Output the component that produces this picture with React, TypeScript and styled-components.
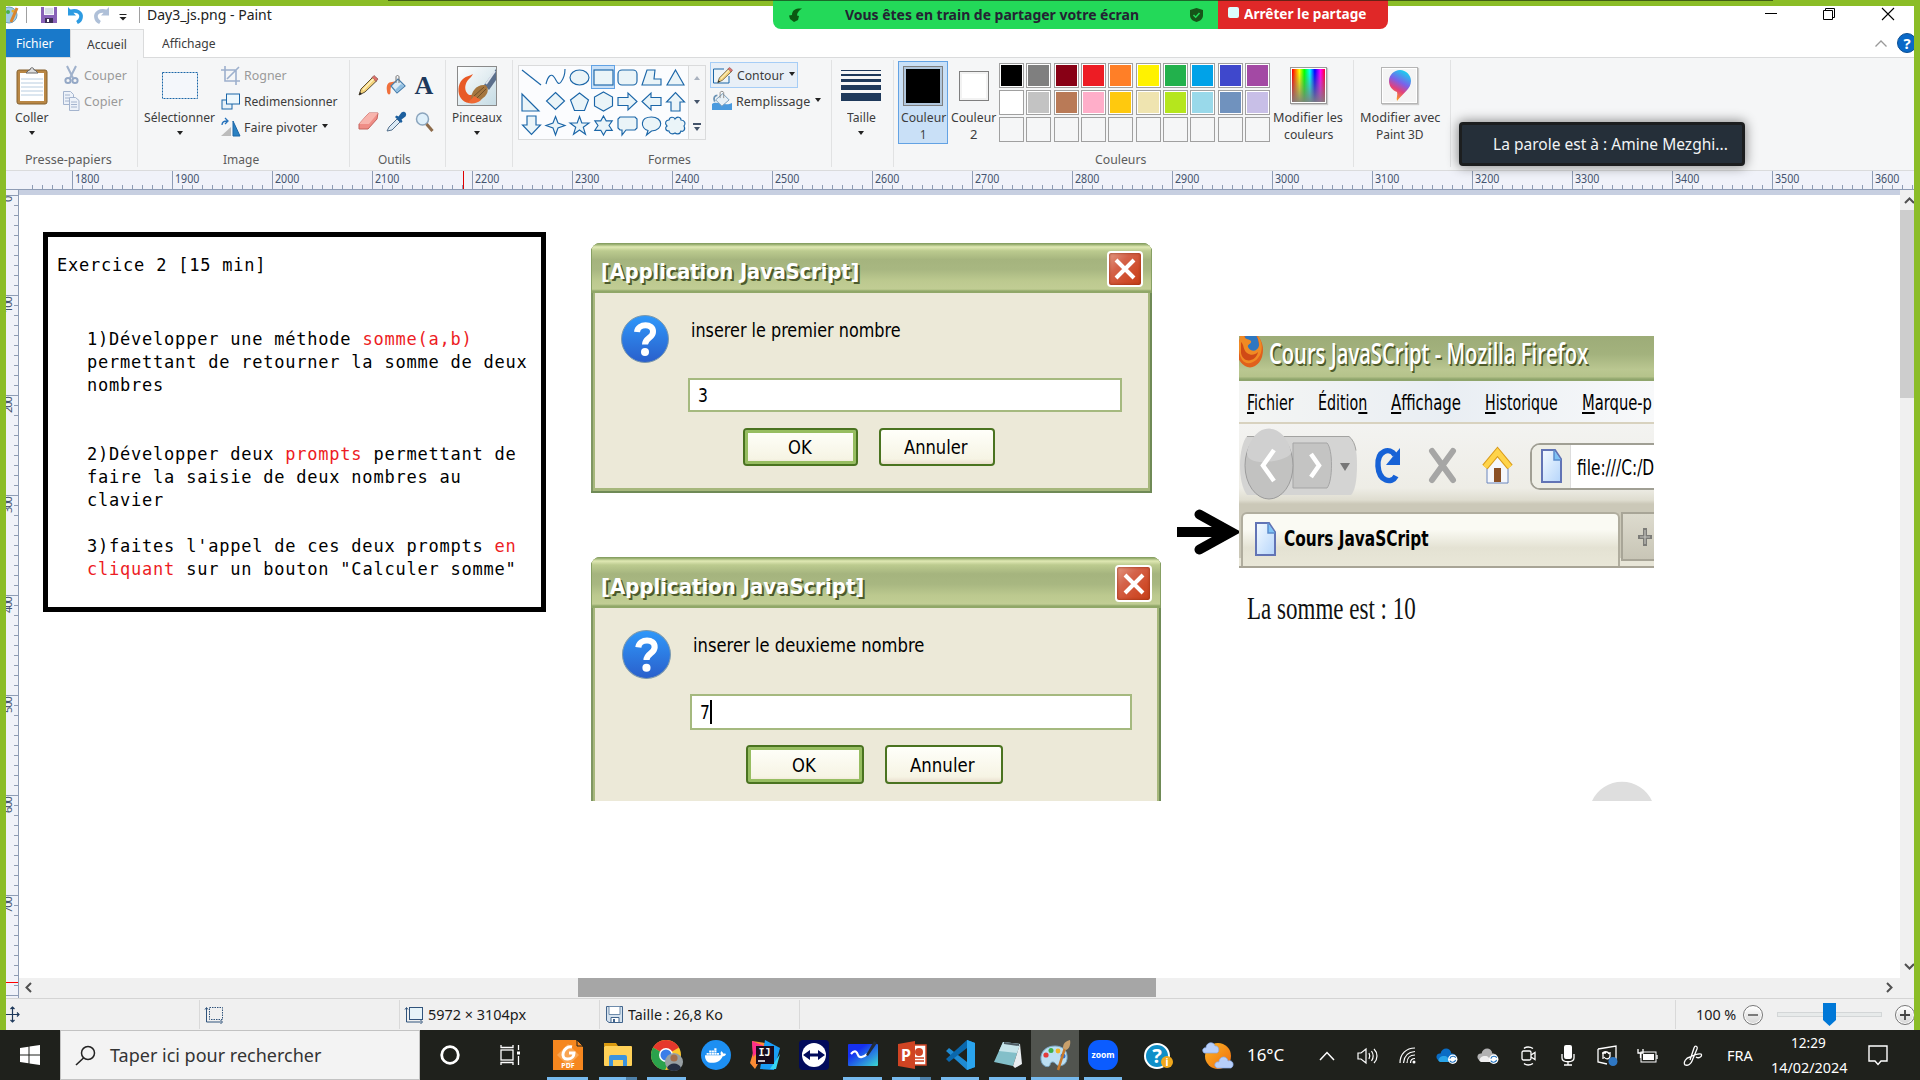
import React, { useLayoutEffect, useRef, useState } from "react";
import styled, { createGlobalStyle, css } from "styled-components";
import { FaDocker } from "react-icons/fa";

const UI = `"Noto Sans", "Open Sans", sans-serif`;
const TAHOMA = `"DejaVu Sans Condensed", "DejaVu Sans", sans-serif`;

const Global = createGlobalStyle`
  * { box-sizing: border-box; }
  html, body { margin: 0; padding: 0; overflow: hidden; }
  body { font-family: ${UI}; font-size: 13px; color: #3c3c3c; }
  svg { display: block; flex: none; overflow: visible; }
`;

/* ---------- text that is condensed or widened to a given width ---------- */
type TextProps = { w: number; size?: number; color?: string; weight?: number; font?: string; shadow?: string; children: React.ReactNode };

const FitBox = styled.span<{ $w: number; $size: number; $color?: string; $weight: number; $font: string; $shadow?: string }>`
  display: block;
  flex: none;
  width: ${(p) => p.$w}px;
  font-family: ${(p) => p.$font};
  font-size: ${(p) => p.$size}px;
  font-weight: ${(p) => p.$weight};
  line-height: 1.3;
  white-space: pre;
  text-align: left;
  ${(p) => p.$color && css`color: ${p.$color};`}
  ${(p) => p.$shadow && css`text-shadow: ${p.$shadow};`}
`;
const FitInner = styled.span`
  display: block;
  width: max-content;
  transform-origin: 0 50%;
`;

function Txt({ w, size = 13, color, weight = 400, font = UI, shadow, children }: TextProps) {
  const ref = useRef<HTMLSpanElement>(null);
  const [scale, setScale] = useState(1);
  useLayoutEffect(() => {
    if (ref.current) setScale(w / ref.current.offsetWidth);
  }, [w]);
  return (
    <FitBox $w={w} $size={size} $color={color} $weight={weight} $font={font} $shadow={shadow}>
      <FitInner ref={ref} style={{ transform: `scaleX(${scale})` }}>{children}</FitInner>
    </FitBox>
  );
}

/* ---------- frame ---------- */
const Screen = styled.div`
  position: relative;
  width: 1920px;
  height: 1080px;
  overflow: hidden;
  display: flex;
  flex-direction: column;
  background: #8bbd27;
`;
const PaintWindow = styled.main`
  margin: 6px 6px 0;
  height: 1024px;
  display: flex;
  flex-direction: column;
  background: #fff;
  overflow: hidden;
`;

/* ---------- title bar ---------- */
const TitleBar = styled.header`
  height: 23px;
  flex: none;
  display: flex;
  align-items: flex-start;
  position: relative;
`;
const QuickAccess = styled.div`
  display: flex;
  align-items: center;
  height: 18px;
  width: 141px;
  flex: none;
`;
const TitleWrap = styled.div`
  display: flex;
  height: 19px;
  align-items: center;
  color: #222;
`;
const WindowButtons = styled.div`
  margin-left: auto;
  display: flex;
  gap: 46px;
  padding: 2px 20px 0 0;
`;

const TabRow = styled.nav`
  height: 28px;
  flex: none;
  display: flex;
  align-items: stretch;
`;
const FileTab = styled.div`
  width: 64px;
  padding-left: 10px;
  background: #1979ca;
  display: flex;
  align-items: center;
`;
const HomeTab = styled.div`
  width: 74px;
  background: #f5f6f7;
  border: 1px solid #dadbdc;
  border-bottom: 0;
  margin-bottom: -1px;
  z-index: 1;
  display: flex;
  align-items: center;
  justify-content: center;
`;
const PlainTab = styled.div`
  padding-left: 18px;
  display: flex;
  align-items: center;
`;
const TabTools = styled.div`
  margin-left: auto;
  margin-right: -3px;
  display: flex;
  align-items: center;
  gap: 10px;
`;

/* ---------- ribbon ---------- */
const Ribbon = styled.section`
  height: 114px;
  flex: none;
  display: flex;
  background: #f5f6f7;
  border-top: 1px solid #dadbdc;
  border-bottom: 1px solid #dadbdc;
`;
const Group = styled.div<{ $w: number }>`
  width: ${(p) => p.$w}px;
  height: 107px;
  margin-top: 2px;
  flex: none;
  border-right: 1px solid #e1e2e3;
  display: flex;
  flex-direction: column;
`;
const GroupBody = styled.div<{ $l?: number; $gap?: number }>`
  height: 91px;
  display: flex;
  align-items: flex-start;
  padding-left: ${(p) => p.$l ?? 0}px;
  gap: ${(p) => p.$gap ?? 0}px;
`;
const GroupLabel = styled.div`
  height: 16px;
  display: flex;
  align-items: center;
  justify-content: center;
  padding-right: 6px;
  color: #5c5c5c;
`;
const BigButton = styled.div<{ $w: number; $on?: boolean }>`
  width: ${(p) => p.$w}px;
  flex: none;
  height: 83px;
  margin-top: 1px;
  display: flex;
  flex-direction: column;
  align-items: center;
  border: 1px solid ${(p) => (p.$on ? "#62a2e4" : "transparent")};
  background: ${(p) => (p.$on ? "#c9e0f7" : "transparent")};
`;
const BigIcon = styled.div`
  height: 47px;
  flex: none;
  display: flex;
  align-items: center;
  justify-content: center;
`;
const Line = styled.div`
  height: 17px;
  flex: none;
  display: flex;
  align-items: center;
  justify-content: center;
`;
const SmallColumn = styled.div`
  display: flex;
  flex-direction: column;
  padding-top: 2px;
`;
const SmallRow = styled.div<{ $off?: boolean; $gap?: number }>`
  height: 26px;
  display: flex;
  align-items: center;
  gap: ${(p) => p.$gap ?? 4}px;
  color: ${(p) => (p.$off ? "#9a9a9a" : "#3c3c3c")};
`;
const ToolGrid = styled.div`
  display: grid;
  grid-template-columns: repeat(3, 28px);
  grid-template-rows: repeat(2, 36px);
  padding-top: 7px;
  place-items: center;
`;
const Caret = styled.i<{ $up?: boolean; $c?: string }>`
  width: 0;
  height: 0;
  flex: none;
  border: 3.5px solid transparent;
  border-width: ${(p) => (p.$up ? "0 3.5px 4px" : "4px 3.5px 0")};
  border-top-color: ${(p) => (p.$up ? "transparent" : p.$c ?? "#222")};
  border-bottom-color: ${(p) => (p.$up ? p.$c ?? "#222" : "transparent")};
`;
const LowCaret = styled(Caret)`
  margin-top: 5px;
`;
const Raised = styled.span`
  display: flex;
  padding-bottom: 3px;
  margin-left: 1px;
`;
const Gallery = styled.div`
  display: flex;
  height: 75px;
  margin-top: 5px;
  border: 1px solid #dadbdc;
  background: #fbfcfe;
`;
const ShapeGrid = styled.div`
  display: grid;
  grid-template-columns: repeat(7, 24px);
  grid-auto-rows: 24px;
  width: 169px;
  margin-top: -1px;
`;
const ShapeCell = styled.div<{ $on?: boolean }>`
  display: flex;
  align-items: center;
  justify-content: center;
  border: 1px solid ${(p) => (p.$on ? "#62a2e4" : "transparent")};
  background: ${(p) => (p.$on ? "#c9e0f7" : "transparent")};
`;
const GalleryScroll = styled.div`
  width: 17px;
  display: grid;
  grid-template-rows: repeat(3, 1fr);
  place-items: center;
  border-left: 1px solid #dadbdc;
  background: #f5f6f7;
`;
const MoreMark = styled.span`
  display: flex;
  flex-direction: column;
  align-items: center;
  gap: 2px;
  &::before { content: ""; width: 8px; height: 2px; background: #44546a; }
`;
const OutlineButton = styled(SmallRow)`
  width: 88px;
  margin-left: -2px;
  padding-left: 2px;
  border: 1px solid #a6cdf6;
  background: #e8eff7;
`;
const Stack = styled.div`
  width: 40px;
  display: flex;
  flex-direction: column;
  gap: 3px;
`;
const Bar = styled.i<{ $h: number }>`
  height: ${(p) => p.$h}px;
  background: #1e395b;
`;
const Well = styled.i<{ $s: number; $c: string; $inner: string }>`
  width: ${(p) => p.$s}px;
  height: ${(p) => p.$s}px;
  border: 1px solid #7f7f7f;
  box-shadow: inset 0 0 0 2px ${(p) => p.$inner};
  background: ${(p) => p.$c};
`;
const Palette = styled.div`
  width: 271px;
  margin: 3px 0 0;
  flex: none;
  display: grid;
  grid-template-columns: repeat(10, 25px);
  grid-auto-rows: 25px;
  row-gap: 2px;
  justify-content: space-between;
`;
const Swatch = styled.i<{ $c?: string }>`
  border: 1px solid #a0a0a0;
  background: ${(p) => p.$c ?? "#f5f6f7"};
  ${(p) => p.$c && css`box-shadow: inset 0 0 0 1px #fff;`}
`;
const Rainbow = styled.i`
  width: 37px;
  height: 37px;
  border: 1px solid #999;
  box-shadow: inset 0 0 0 1px #fff, 1px 1px 1px #ccc;
  background: linear-gradient(transparent 10%, rgba(128, 128, 128, 0.95)),
    linear-gradient(90deg, #f00 4%, #ff0 24%, #0f0 38%, #0ff 54%, #00f 68%, #f0f 84%, #f00);
`;
const IconFrame = styled.div`
  width: 37px;
  height: 37px;
  border: 1px solid #b5b5b5;
  background: #f4f4f4;
  box-shadow: inset 0 0 0 1px #fff, 1px 1px 1px #ccc;
  display: flex;
  align-items: center;
  justify-content: center;
`;

/* ---------- rulers ---------- */
const Ruler = styled.div`
  height: 19px;
  flex: none;
  display: flex;
  padding-left: 26px;
  background: #f0f2f9;
  border-bottom: 1px solid #8e9cb5;
  overflow: hidden;
  position: relative;
`;
const HCell = styled.div<{ $w: number; $major?: boolean }>`
  width: ${(p) => p.$w}px;
  flex: none;
  display: flex;
  align-items: flex-start;
  padding-left: 2px;
  color: #44546f;
  border-left: 1px solid ${(p) => (p.$major ? "#8e9cb5" : "transparent")};
  background: repeating-linear-gradient(90deg, #8e9cb5 0 1px, transparent 1px 10px) border-box 0 14px / 100% 4px no-repeat;
`;
const HMark = styled.i`
  position: absolute;
  left: 457px;
  top: 0;
  width: 1px;
  height: 18px;
  background: #e00000;
`;
const VRuler = styled.div`
  width: 13px;
  flex: none;
  padding-top: 5px;
  background: #f0f2f9;
  border-right: 1px solid #8e9cb5;
  overflow: hidden;
  position: relative;
`;
const VCell = styled.div`
  height: 100px;
  border-top: 1px solid #8e9cb5;
  background: repeating-linear-gradient(#8e9cb5 0 1px, transparent 1px 10px) border-box 8px 0 / 4px 100% no-repeat;
`;
const VLabel = styled.span`
  display: block;
  writing-mode: vertical-rl;
  transform: rotate(180deg);
  margin-left: -5px;
  padding-bottom: 1px;
  width: 13px;
  line-height: 13px;
  font-size: 11px;
  letter-spacing: -1px;
  color: #44546f;
  text-align: right;
  height: 24px;
`;
const VMark = styled.i`
  position: absolute;
  left: 0;
  top: 792px;
  width: 12px;
  height: 1px;
  background: #f00;
`;

/* ---------- work area ---------- */
const Work = styled.div`
  height: 808px;
  flex: none;
  display: flex;
`;
const Center = styled.div`
  width: 1881px;
  flex: none;
  display: flex;
  flex-direction: column;
`;
const Gutter = styled.div`
  height: 5px;
  background: #c7cfe1;
`;
const Canvas = styled.div`
  height: 783px;
  flex: none;
  background: #fff;
  position: relative;
  overflow: hidden;
`;
const HScroll = styled.div`
  height: 20px;
  background: #f0f0f0;
  display: flex;
  align-items: center;
  padding: 0 7px 1px 6px;
`;
const HThumb = styled.i`
  width: 578px;
  height: 19px;
  margin-left: 546px;
  margin-right: auto;
  background: #a6a6a6;
`;
const VScroll = styled.div`
  flex: 1;
  background: #f0f0f0;
  display: flex;
  flex-direction: column;
  padding: 7px 0 28px 4px;
`;
const VThumb = styled.i`
  height: 188px;
  margin: 6px 0 auto -4px;
  background: #cdcdcd;
`;

/* ---------- free canvas drawing ---------- */
const Placed = styled.div<{ $x: number; $y: number }>`
  position: absolute;
  left: ${(p) => p.$x}px;
  top: ${(p) => p.$y}px;
`;
const Exercise = styled.div`
  width: 503px;
  height: 380px;
  border: 5px solid #000;
  padding: 17px 0 0 9px;
  font-family: "DejaVu Sans Mono", monospace;
  font-size: 17px;
  letter-spacing: 0.78px;
  line-height: 23px;
  color: #000;
  white-space: pre;
`;
const Steps = styled.div`
  margin: 51px 0 0 30px;
`;
const Red = styled.span`
  color: #ed1c24;
`;

const Dlg = styled.div<{ $w: number; $h: number; $cut?: boolean }>`
  width: ${(p) => p.$w}px;
  height: ${(p) => p.$h}px;
  border-radius: 9px 9px 0 0;
  overflow: hidden;
  background: #ece9d8;
  box-shadow: inset 0 ${(p) => (p.$cut ? 0 : -2)}px 0 0 #6f8a56, inset 2px 0 0 #7f9663, inset -2px 0 0 #6f8a56,
    inset 0 ${(p) => (p.$cut ? 0 : -5)}px 0 #a6b77c, inset 4px 0 0 #a6b77c, inset -4px 0 0 #a6b77c;
`;
const DlgTitle = styled.div<{ $k: number }>`
  height: ${(p) => 50 * p.$k}px;
  display: flex;
  align-items: center;
  justify-content: space-between;
  padding: 4px 8px 3px 9px;
  border: 2px solid #87a063;
  border-width: 1px 1px 0;
  background: linear-gradient(#8fa767 0, #e0e9b4 6%, #bccb8f 14%, #a5b47e 32%, #a8b781 52%, #bcc98f 75%, #c1cd94 92%, #90a768 96%);
`;
const DlgCaption = styled.div`
  padding-top: 7px;
`;
const DlgClose = styled.div<{ $k: number }>`
  width: ${(p) => 36 * p.$k}px;
  height: ${(p) => 36 * p.$k}px;
  border: 2px solid #fff;
  border-radius: 4px;
  display: flex;
  align-items: center;
  justify-content: center;
  box-shadow: inset 0 0 3px #8d2b10;
  background: linear-gradient(135deg, #e39a84 0, #d4634a 35%, #cf4c2a 70%, #c4401a);
`;
const DlgBody = styled.div<{ $k: number }>`
  padding: ${(p) => 22 * p.$k}px 0 0 ${(p) => 30 * p.$k}px;
  color: #000;
`;
const DlgMessage = styled.div<{ $k: number }>`
  display: flex;
  height: ${(p) => 48 * p.$k}px;
  gap: ${(p) => 22 * p.$k}px;
`;
const DlgLabel = styled.div`
  padding-top: 3px;
`;
const DlgInput = styled.div<{ $k: number }>`
  width: ${(p) => 433.5 * p.$k}px;
  height: ${(p) => 34.6 * p.$k}px;
  margin: ${(p) => `${14.7 * p.$k}px 0 0 ${67.3 * p.$k}px`};
  padding-left: 8px;
  border: 2px solid #a5b97f;
  background: #fff;
  display: flex;
  align-items: center;
`;
const TextCaret = styled.i`
  width: 2px;
  height: 24px;
  background: #000;
`;
const DlgButtons = styled.div<{ $k: number }>`
  display: flex;
  gap: ${(p) => 21 * p.$k}px;
  margin: ${(p) => `${15.3 * p.$k}px 0 0 ${122.3 * p.$k}px`};
`;
const DlgButton = styled.div<{ $k: number; $main?: boolean }>`
  width: ${(p) => 115.2 * p.$k}px;
  height: ${(p) => 38.3 * p.$k}px;
  border: 2px solid #4a7320;
  border-radius: 4px;
  display: flex;
  align-items: center;
  justify-content: center;
  padding: 1px 2px 0 0;
  background: linear-gradient(#fffffa, #f6f4e4 85%, #eadfce);
  ${(p) => p.$main && css`box-shadow: inset 0 0 0 3px #97bd61;`}
`;

const Browser = styled.div`
  width: 415px;
  height: 232px;
  overflow: hidden;
  display: flex;
  flex-direction: column;
  color: #000;
`;
const BrTitle = styled.div`
  height: 45px;
  flex: none;
  display: flex;
  align-items: flex-start;
  gap: 6px;
  background: linear-gradient(#9dac78 0, #a3b27d 40%, #bac791 75%, #b5c38b 90%, #8fa56c 96%);
`;
const BrCaption = styled.div`
  margin-top: -1px;
`;
const BrMenu = styled.div`
  height: 43px;
  flex: none;
  display: flex;
  align-items: center;
  padding: 3px 0 0 8px;
  gap: 24px;
  border-bottom: 2px solid #d8d2bf;
  background: linear-gradient(90deg, #f4f5f3, #e9eef3 50%, #f8f9fa);
`;
const BrTools = styled.div`
  height: 80px;
  flex: none;
  display: flex;
  align-items: center;
  background: linear-gradient(#f3f3f1, #eeede6 80%, #dfddd0 95%, #cbc8b8);
`;
const UrlBox = styled.div`
  height: 47px;
  width: 140px;
  flex: none;
  margin: 4px 0 0 -1px;
  border: 2px solid #a09f94;
  border-radius: 10px 0 0 10px;
  display: flex;
  align-items: center;
  background: #fff;
`;
const UrlIcon = styled.div`
  width: 39px;
  height: 100%;
  border-radius: 8px 0 0 8px;
  border-right: 1px solid #ddd;
  background: #eeeee6;
  display: flex;
  align-items: center;
  justify-content: center;
  margin-right: 6px;
`;
const UrlText = styled.div`
  padding-top: 5px;
`;
const BrTabs = styled.div`
  height: 64px;
  flex: none;
  padding: 8px 0 0 2px;
  display: flex;
  align-items: flex-start;
  gap: 1px;
  border-bottom: 2px solid #a8a496;
  background: linear-gradient(#cbc8b8 0, #cbc8b8 87%, #e8e6d8 87%);
`;
const BrTab = styled.div`
  width: 379px;
  height: 54px;
  flex: none;
  border: 2px solid #b0ad9e;
  border-bottom: 0;
  border-radius: 6px 6px 0 0;
  padding: 0 0 2px 12px;
  gap: 8px;
  display: flex;
  align-items: center;
  background: linear-gradient(#fafaf3 30%, #e4e2d3 65%, #e9e7d8);
`;
const BrNewTab = styled.div`
  width: 50px;
  height: 49px;
  flex: none;
  border: 2px solid #a8a597;
  padding-left: 15px;
  display: flex;
  align-items: center;
  background: linear-gradient(#dddbce, #c8c5b6);
`;

/* ---------- status bar ---------- */
const Status = styled.footer`
  height: 32px;
  flex: none;
  border-top: 1px solid #d4d4d4;
  background: #f0f0f0;
  display: flex;
  align-items: center;
  color: #1a1a1a;
`;
const StatusCell = styled.div<{ $w: number; $pl?: number }>`
  width: ${(p) => p.$w}px;
  height: 29px;
  flex: none;
  padding-left: ${(p) => p.$pl ?? 5}px;
  gap: 4px;
  border-right: 1px solid #d9d9d9;
  display: flex;
  align-items: center;
`;
const StatusText = styled.div`
  padding-top: 2px;
`;
const ZoomArea = styled.div`
  display: flex;
  align-items: center;
  padding-left: 20px;
`;
const RoundBtn = styled.span`
  width: 20px;
  height: 20px;
  flex: none;
  border: 1px solid #777;
  border-radius: 50%;
  display: flex;
  align-items: center;
  justify-content: center;
  background: linear-gradient(#fff, #d5d5d5);
  box-shadow: inset 0 0 0 1px #fff;
`;
const Track = styled.div`
  width: 105px;
  height: 5px;
  margin: 0 13px 0 14px;
  flex: none;
  border: 1px solid #d3d6d7;
  background: #e7eaea;
  display: flex;
  align-items: center;
  justify-content: center;
`;

/* ---------- task bar ---------- */
const Taskbar = styled.div`
  height: 50px;
  flex: none;
  background: #1f211c;
  display: flex;
  color: #fff;
`;
const StartBtn = styled.div`
  width: 60px;
  flex: none;
  display: flex;
  align-items: center;
  justify-content: center;
`;
const SearchBox = styled.div`
  width: 360px;
  height: 50px;
  flex: none;
  border: 1px solid #c2c2c2;
  background: #f3f3f3;
  display: flex;
  align-items: center;
  gap: 14px;
  padding: 1px 0 0 14px;
  color: #333;
`;
const TaskItem = styled.div<{ $w: number; $on?: boolean; $run?: boolean; $multi?: boolean }>`
  width: ${(p) => p.$w}px;
  flex: none;
  height: 50px;
  display: flex;
  flex-direction: column;
  align-items: center;
  background: ${(p) => (p.$on ? "#51544f" : "transparent")};
  &::after {
    content: "";
    width: ${(p) => (p.$on ? 100 : 78)}%;
    height: 3px;
    flex: none;
    background: ${(p) => (!p.$run ? "transparent" : p.$multi ? "linear-gradient(90deg, #76b9ed 72%, #4e80a8 72%)" : "#76b9ed")};
  }
`;
const TaskIcon = styled.div`
  height: 47px;
  padding-top: 3px;
  display: flex;
  align-items: center;
  justify-content: center;
`;
const Tray = styled.div`
  flex: 1;
  min-width: 0;
  height: 50px;
  display: flex;
`;
const TrayItem = styled.div<{ $w: number; $start?: boolean }>`
  width: ${(p) => p.$w}px;
  flex: none;
  display: flex;
  align-items: center;
  justify-content: ${(p) => (p.$start ? "flex-start" : "center")};
  padding-top: 1px;
`;
const Clock = styled(TrayItem)`
  flex-direction: column;
  justify-content: center;
  gap: 6px;
`;
const Docker = styled.span`
  width: 30px;
  height: 30px;
  border-radius: 50%;
  background: #1d8ff2;
  display: flex;
  align-items: center;
  justify-content: center;
  font-size: 21px;
`;

/* ---------- overlays ---------- */
const ShareBar = styled.div`
  position: absolute;
  left: 773px;
  top: 0;
  width: 615px;
  height: 29px;
  border-radius: 0 0 8px 8px;
  overflow: hidden;
  display: flex;
`;
const ShareInfo = styled.div`
  width: 445px;
  padding: 1px 15px 0 16px;
  display: flex;
  align-items: center;
  background: #23d959;
`;
const ShareText = styled.div`
  margin: 0 auto 0 43px;
`;
const ShareStop = styled.div`
  width: 170px;
  padding: 1px 0 0 10px;
  gap: 5px;
  display: flex;
  align-items: center;
  background: #e02828;
`;
const StopIcon = styled.i`
  width: 11px;
  height: 11px;
  margin-bottom: 6px;
  border-radius: 2px;
  background: #dcfdff;
`;
const TopLine = styled.i`
  position: absolute;
  left: 388px;
  top: 0;
  width: 1385px;
  height: 1px;
  background: rgba(20, 30, 10, 0.6);
`;
const Toast = styled.div`
  position: absolute;
  left: 1459px;
  top: 122px;
  width: 286px;
  height: 44px;
  border: 3px solid #1c1e1f;
  border-radius: 4px;
  background: #252f39;
  box-shadow: 0 0 12px 1px rgba(0, 0, 0, 0.45);
  display: flex;
  align-items: center;
  padding: 1px 0 0 31px;
`;

/* ---------- drawings ---------- */
const B = "#1b66a8";
const shapes: React.ReactNode[] = [
  <path d="M1 3L20 18" />,
  <path d="M1 17C3 9 6 6 9 10s4 9 7 5 4-7 4-13" />,
  <ellipse cx="10.500" cy="10.500" rx="9.500" ry="7.500" />,
  <rect x="1" y="3" width="19" height="15" />,
  <rect x="1" y="3" width="19" height="15" rx="4" />,
  <path d="M6 3h8l-1 9h7v6H1z" />,
  <path d="M10.500 3l8.500 15H2z" />,
  <path d="M1 3v17h17z" />,
  <path d="M10.500 1.500l9 8.500-9 8.500-9-8.500z" />,
  <path d="M10.500 2l9 7-4 10.500H5.500L1.500 9z" />,
  <path d="M10.500 1l9 5v9l-9 5-9-5V6z" />,
  <path d="M1 6.500h10V2l9 8.500-9 8.500v-4.500H1z" />,
  <path d="M20 6.500H10V2l-9 8.500L10 19v-4.500h10z" />,
  <path d="M6 20v-9H1.500l9-9.500 9 9.500H15v9z" />,
  <path d="M6 1v9H1.500l9 9.500 9-9.500H15V1z" />,
  <path d="M10.500 1.500l2.500 6.500 7 2.500-7 2.500-2.500 7-2.500-7-7-2.500 7-2.500z" />,
  <path d="M10.500 1.500l2.300 6.500H20l-5.700 4.300 2.200 7-6-4.300-6 4.300 2.200-7L1 8h7.200z" />,
  <path d="M10.500 1l2.700 4.800h6L16 10.500l3.200 4.800h-6L10.500 20l-2.700-4.700h-6L5 10.500 1.800 5.800h6z" />,
  <path d="M3 2h15l2 2v9l-2 2h-9l-4 5v-5H3l-2-2V4z" />,
  <path d="M7 15.500C-1 13-1 2 10.500 2s13 13 0 14l-5 4z" />,
  <path d="M4 5c1-4 5-3 6-1 2-3 6-2 6 1 4 0 5 4 3 6 2 4-1 6-3 5-1 4-5 3-6 2-3 2-6 0-6-2-4 0-4-4-2-5-3-3-1-6 2-6z" />,
];

const Swoosh = ({ flip, color }: { flip?: boolean; color: string }) => (
  <svg width="17" height="17" viewBox="0 0 17 17" transform={flip ? "scale(-1,1)" : undefined}>
    <path d="M3.500 4.500C10 2.500 15 6 14 10.500c-.5 2.500-2 4-4 5" fill="none" stroke={color} strokeWidth="3.600" />
    <path d="M1 0v8.500h8z" fill={color} />
  </svg>
);
const PencilG = () => (
  <g>
    <path d="M1 20l2-6L15 2l4 3.500L7 17z" fill="#f3d27a" stroke="#5e5137" strokeWidth="1" />
    <path d="M14 2.500L16 .5l4 3.500-2 2.500z" fill="#e0726c" stroke="#84514d" strokeWidth=".7" />
    <path d="M1 20l1-3 2 2z" fill="#222" />
    <path d="M5 15L15.500 4" stroke="#fff1bf" strokeWidth="1.500" />
  </g>
);
const BucketG = () => (
  <g>
    <path d="M1 16c-1-6 1-9 5-9l5-1-6 6c-1 3 0 6-1 7s-3 0-3-3z" fill="#f0703c" />
    <path d="M12 4l7 7-8 7-6-7z" fill="#dcebf7" stroke="#4a80ae" strokeWidth="1.200" />
    <path d="M15 9l3 2-7 6-2-2z" fill="#8fbfe3" />
    <path d="M10 8V2c0-2 3-2 3 0v6" fill="none" stroke="#777" />
  </g>
);
const FileIcon = () => (
  <svg width="21" height="34" viewBox="0 0 21 34">
    <defs><linearGradient id="fi" x1="0" y1="0" x2="1" y2="1"><stop offset="0" stopColor="#f5fbff" /><stop offset="1" stopColor="#b5d5fb" /></linearGradient></defs>
    <path d="M1 1h13l6 9v23H1z" fill="url(#fi)" stroke="#6274b5" strokeWidth="2" />
    <path d="M13 1v10h7" fill="#7ec3f5" stroke="#5b8ccc" strokeWidth="1.500" />
  </svg>
);
const SizeIcon = ({ dashed }: { dashed?: boolean }) => (
  <svg width="19" height="18" viewBox="0 0 19 18">
    <rect x="4.500" y="1.500" width="13" height="12" fill={dashed ? "none" : "#e6f3f8"} stroke="#31547c" strokeDasharray={dashed ? "1.500 1" : undefined} />
    <path d="M1.500 2v14h15M0 3.500l1.500-2L3 3.500M15.500 14l2 2-2 2" fill="none" stroke="#31547c" />
  </svg>
);
const QuestionBall = ({ s, id }: { s: number; id: string }) => (
  <svg width={s} height={s} viewBox="0 0 48 48">
    <defs><linearGradient id={id} x1="0" y1="0" x2="0" y2="1"><stop offset="0" stopColor="#2f98fa" /><stop offset="1" stopColor="#2a5fcb" /></linearGradient></defs>
    <circle cx="24" cy="24" r="23.500" fill={`url(#${id})`} stroke="#7c99ad" />
    <path d="M16 17c1-9 16.500-9 16 0 0 6-8 6-8 12.500" fill="none" stroke="#fff" strokeWidth="6" />
    <circle cx="24" cy="37" r="4" fill="#fff" />
  </svg>
);

function Dialog({ k, w, h, cut, titleW, msg, msgW, value, okW, cancelW }: {
  k: number; w: number; h: number; cut?: boolean; titleW: number; msg: string; msgW: number; value: string; okW: number; cancelW: number;
}) {
  return (
    <Dlg $w={w} $h={h} $cut={cut}>
      <DlgTitle $k={k}>
        <DlgCaption>
          <Txt w={titleW} size={22} color="#fff" weight={700} font={TAHOMA} shadow="2px 2px 0 #4d5a2c">[Application JavaScript]</Txt>
        </DlgCaption>
        <DlgClose $k={k}>
          <svg width="22" height="22" viewBox="0 0 22 22"><path d="M2 2l18 18M20 2L2 20" stroke="#fff" strokeWidth="4" /></svg>
        </DlgClose>
      </DlgTitle>
      <DlgBody $k={k}>
        <DlgMessage $k={k}>
          <QuestionBall s={48 * k} id={cut ? "qb2" : "qb1"} />
          <DlgLabel><Txt w={msgW} size={19} font={TAHOMA}>{msg}</Txt></DlgLabel>
        </DlgMessage>
        <DlgInput $k={k}>
          <Txt w={10} size={19} font={TAHOMA}>{value}</Txt>
          {cut && <TextCaret />}
        </DlgInput>
        <DlgButtons $k={k}>
          <DlgButton $k={k} $main><Txt w={okW} size={19} font={TAHOMA}>OK</Txt></DlgButton>
          <DlgButton $k={k}><Txt w={cancelW} size={19} font={TAHOMA}>Annuler</Txt></DlgButton>
        </DlgButtons>
      </DlgBody>
    </Dlg>
  );
}

const palette: (string | undefined)[] = [
  "#000000", "#7f7f7f", "#880015", "#ed1c24", "#ff7f27", "#fff200", "#22b14c", "#00a2e8", "#3f48cc", "#a349a4",
  "#ffffff", "#c3c3c3", "#b97a57", "#ffaec9", "#ffc90e", "#efe4b0", "#b5e61d", "#99d9ea", "#7092be", "#c8bfe7",
  ...Array(10).fill(undefined),
];

function RibbonBar() {
  return (
    <Ribbon>
      <Group $w={132}>
        <GroupBody $l={3} $gap={8}>
          <BigButton $w={46}>
            <BigIcon>
              <svg width="32" height="38" viewBox="0 0 32 38">
                <rect x="1" y="3" width="30" height="34" rx="2" fill="#b98745" stroke="#84602f" />
                <rect x="4" y="6" width="24" height="28" fill="#fff" />
                <path d="M5 12h22M5 16h22M5 20h22M5 24h22M5 28h22" stroke="#b8cde0" />
                <path d="M10 6h12l-3-3h-1c0-3-4-3-4 0h-1z" fill="#ddd" stroke="#666" />
              </svg>
            </BigIcon>
            <Line><Txt w={34}>Coller</Txt></Line>
            <LowCaret />
          </BigButton>
          <SmallColumn>
            <SmallRow $off>
              <svg width="17" height="20" viewBox="0 0 17 20"><path d="M4 1l6 12M13 1L7 13" stroke="#9fb1cb" strokeWidth="2" /><circle cx="5" cy="15.500" r="2.600" fill="none" stroke="#94a8c6" strokeWidth="2" /><circle cx="12" cy="15.500" r="2.600" fill="none" stroke="#94a8c6" strokeWidth="2" /></svg>
              <Txt w={43}>Couper</Txt>
            </SmallRow>
            <SmallRow $off>
              <svg width="17" height="20" viewBox="0 0 17 20"><g fill="#edf2f9" stroke="#a4b4ce"><path d="M.5.500h7l3 3v10H.5z" /><path d="M6.500 6.500h6l3.500 3v10H6.500z" /><path d="M8 11h6M8 13.500h6M8 16h6M2 4h5M2 7h4M2 10h4" /></g></svg>
              <Txt w={39}>Copier</Txt>
            </SmallRow>
          </SmallColumn>
        </GroupBody>
        <GroupLabel><Txt w={87}>Presse-papiers</Txt></GroupLabel>
      </Group>

      <Group $w={212}>
        <GroupBody $l={5} $gap={5}>
          <BigButton $w={73}>
            <BigIcon>
              <svg width="36" height="27" viewBox="0 0 36 27"><rect x=".5" y=".5" width="35" height="26" fill="#f4f7fb" stroke="#1b66a8" strokeDasharray="2 1" /></svg>
            </BigIcon>
            <Line><Txt w={71}>Sélectionner</Txt></Line>
            <LowCaret />
          </BigButton>
          <SmallColumn>
            <SmallRow $off>
              <svg width="19" height="19" viewBox="0 0 19 19"><path d="M4 0v15h15M0 4h15v15M6 13L18 1" fill="none" stroke="#9db0cd" strokeWidth="1.600" /></svg>
              <Txt w={43}>Rogner</Txt>
            </SmallRow>
            <SmallRow>
              <svg width="19" height="17" viewBox="0 0 19 17"><rect x="1" y="7" width="10" height="9" fill="#e8f2f8" stroke={B} /><rect x="5.500" y="1" width="13" height="10" fill="#edf7fc" stroke={B} /></svg>
              <Txt w={94}>Redimensionner</Txt>
            </SmallRow>
            <SmallRow>
              <svg width="19" height="18" viewBox="0 0 19 18"><path d="M0 18h10V9z" fill="#bcbcbc" /><path d="M12 18h7L12 3z" fill="#2b81c2" stroke={B} /><path d="M1 7c0-3 2-4 5-4M4 0l3 3-3 3" fill="none" stroke="#2672bb" strokeWidth="1.300" /></svg>
              <Txt w={73}>Faire pivoter</Txt>
              <Raised><Caret /></Raised>
            </SmallRow>
          </SmallColumn>
        </GroupBody>
        <GroupLabel><Txt w={36}>Image</Txt></GroupLabel>
      </Group>

      <Group $w={96}>
        <GroupBody $l={4}>
          <ToolGrid>
            <svg width="21" height="21" viewBox="0 0 21 21"><PencilG /></svg>
            <svg width="21" height="21" viewBox="0 0 21 21"><BucketG /></svg>
            <svg width="22" height="30" viewBox="0 0 22 30"><text x="11" y="24" textAnchor="middle" fontFamily="Liberation Serif" fontWeight="700" fontSize="26" fill="#1e395b">A</text></svg>
            <svg width="21" height="20" viewBox="0 0 21 20"><path d="M1 13L11 2l9 0-1 6-9 10-9 0z" fill="#ef8d86" stroke="#c4625d" /><path d="M1 13L11 2l9 0-9 11z" fill="#f8b4ad" /></svg>
            <svg width="21" height="21" viewBox="0 0 21 21"><path d="M1 20l2-4 8-8 3 3-8 8z" fill="#dceaf5" stroke="#54708c" /><path d="M9 6l6 6 1.500-1.500-1-2 4-3c2-3-1-6-4-4l-3 4-2-1z" fill="#1d5f9e" /></svg>
            <svg width="19" height="21" viewBox="0 0 19 21"><circle cx="7.500" cy="8" r="6" fill="#dff0fb" stroke="#8ba5bd" strokeWidth="1.500" /><path d="M11.500 13l6 7" stroke="#8d6b4b" strokeWidth="3" /></svg>
          </ToolGrid>
        </GroupBody>
        <GroupLabel><Txt w={33}>Outils</Txt></GroupLabel>
      </Group>

      <Group $w={67}>
        <GroupBody $l={4}>
          <BigButton $w={54}>
            <BigIcon>
              <svg width="40" height="40" viewBox="0 0 40 40">
                <defs><linearGradient id="br" x1="0" y1="0" x2="1" y2="1"><stop offset="0" stopColor="#fff" /><stop offset="1" stopColor="#c5dbe4" /></linearGradient></defs>
                <rect x=".5" y=".5" width="39" height="39" fill="url(#br)" stroke="#8a8a8a" />
                <path d="M16 8c-1 2-2 3-4 5-4 4-5 10-2 14 1 2 4 3 7 1l1 9h-6C5 36 1 30 1.500 23 2 15 7 11 13 9.500z" fill="#e85a26" />
                <path d="M39 3L27 19l5 5 7-10z" fill="#5b6f8c" />
                <path d="M38 5L29 18" stroke="#dfe6ee" strokeWidth="2" />
                <path d="M14 34c0-9 6-16 14-15 4 2 4 9-2 13-3 3-7 5-12 4z" fill="#a5763f" />
                <path d="M11 37c2-3 4-4 6-7l7 4c-3 3-8 4-13 3z" fill="#ef6a34" />
                <path d="M17 30l10-9M20 32l9-9" stroke="#735028" />
              </svg>
            </BigIcon>
            <Line><Txt w={50}>Pinceaux</Txt></Line>
            <LowCaret />
          </BigButton>
        </GroupBody>
      </Group>

      <Group $w={319}>
        <GroupBody $l={5} $gap={6}>
          <Gallery>
            <ShapeGrid>
              {shapes.map((s, i) => (
                <ShapeCell key={i} $on={i === 3}>
                  <svg width="21" height="21" viewBox="0 0 21 21" fill={i < 2 ? "none" : "#eaf4f8"} stroke={B} strokeWidth="1.150">{s}</svg>
                </ShapeCell>
              ))}
            </ShapeGrid>
            <GalleryScroll>
              <Caret $up $c="#a9b2bf" />
              <Caret $c="#44546a" />
              <MoreMark><Caret $c="#44546a" /></MoreMark>
            </GalleryScroll>
          </Gallery>
          <SmallColumn>
            <OutlineButton>
              <svg width="20" height="17" viewBox="0 0 20 17"><path d="M11 2H.5v14H16V9" fill="#eef4f8" stroke={B} /><g transform="translate(4 0) scale(.78)"><PencilG /></g></svg>
              <Txt w={47}>Contour</Txt><Raised><Caret /></Raised>
            </OutlineButton>
            <SmallRow>
              <svg width="20" height="20" viewBox="0 0 20 20"><path d="M0 13c4-4 13 3 20-1v7H0z" fill="#4a9ade" /><g transform="translate(0 -1) scale(.9)"><path d="M12 4l7 7-8 7-7-7z" fill="#e7f0f6" stroke="#6a93b5" /><path d="M9 9V3c0-2 4-2 4 0v6" fill="none" stroke="#888" /><path d="M3 13c-2-4 0-7 3-7" fill="none" stroke="#6a93b5" strokeWidth="2" /></g></svg>
              <Txt w={74}>Remplissage</Txt><Raised><Caret /></Raised>
            </SmallRow>
          </SmallColumn>
        </GroupBody>
        <GroupLabel><Txt w={43}>Formes</Txt></GroupLabel>
      </Group>

      <Group $w={62}>
        <GroupBody $l={6}>
          <BigButton $w={46}>
            <BigIcon>
              <Stack><Bar $h={1} /><Bar $h={2} /><Bar $h={3} /><Bar $h={5} /><Bar $h={8} /></Stack>
            </BigIcon>
            <Line><Txt w={29}>Taille</Txt></Line>
            <LowCaret />
          </BigButton>
        </GroupBody>
      </Group>

      <Group $w={460}>
        <GroupBody $l={4}>
          <BigButton $w={50} $on>
            <BigIcon><Well $s={40} $c="#000" $inner="#b0c6dc" /></BigIcon>
            <Line><Txt w={45}>Couleur</Txt></Line>
            <Line><Txt w={6}>1</Txt></Line>
          </BigButton>
          <BigButton $w={51}>
            <BigIcon><Well $s={30} $c="#fff" $inner="#f2f2f2" /></BigIcon>
            <Line><Txt w={45}>Couleur</Txt></Line>
            <Line><Txt w={7}>2</Txt></Line>
          </BigButton>
          <Palette>{palette.map((c, i) => <Swatch key={i} $c={c} />)}</Palette>
          <BigButton $w={76}>
            <BigIcon><Rainbow /></BigIcon>
            <Line><Txt w={70}>Modifier les</Txt></Line>
            <Line><Txt w={49}>couleurs</Txt></Line>
          </BigButton>
        </GroupBody>
        <GroupLabel><Txt w={51}>Couleurs</Txt></GroupLabel>
      </Group>

      <Group $w={97}>
        <GroupBody $l={2}>
          <BigButton $w={87}>
            <BigIcon>
              <IconFrame>
                <svg width="22" height="31" viewBox="0 0 22 31">
                  <defs><linearGradient id="p3" x1="0.700" y1="0" x2=".3" y2="1"><stop offset="0" stopColor="#12d7f0" /><stop offset=".4" stopColor="#7a62ea" /><stop offset=".65" stopColor="#e2407c" /><stop offset="1" stopColor="#ffae16" /></linearGradient></defs>
                  <path d="M11 0c6 0 11 5 11 11 0 8-8 12-14 20-1-3 1-6 0-9C3 20 0 16 0 11 0 5 5 0 11 0z" fill="url(#p3)" />
                </svg>
              </IconFrame>
            </BigIcon>
            <Line><Txt w={80}>Modifier avec</Txt></Line>
            <Line><Txt w={48}>Paint 3D</Txt></Line>
          </BigButton>
        </GroupBody>
      </Group>
    </Ribbon>
  );
}

function CanvasContent() {
  return (
    <Canvas>
      <Placed $x={24} $y={37}>
        <Exercise>
          Exercice 2 [15 min]
          <Steps>
            1)Développer une méthode <Red>somme(a,b)</Red>{"\n"}
            {"permettant de retourner la somme de deux\nnombres\n\n\n2)Développer deux "}<Red>prompts</Red>
            {" permettant de\nfaire la saisie de deux nombres au\nclavier\n\n3)faites l'appel de ces deux prompts "}<Red>{"en\ncliquant"}</Red>
            {" sur un bouton \"Calculer somme\""}
          </Steps>
        </Exercise>
      </Placed>

      <Placed $x={572} $y={48}>
        <Dialog k={1} w={561} h={250} titleW={258} msg="inserer le premier nombre" msgW={210} value="3" okW={24} cancelW={64} />
      </Placed>
      <Placed $x={572} $y={362}>
        <Dialog k={1.02} w={570} h={244} cut titleW={263} msg="inserer le deuxieme nombre" msgW={231} value="7" okW={24} cancelW={65} />
      </Placed>

      <Placed $x={1157} $y={314}>
        <svg width="64" height="46" viewBox="0 0 64 46"><path d="M1 23h45" stroke="#000" strokeWidth="10" /><path d="M23.500 5.500L55 23 23.500 40.500" fill="none" stroke="#000" strokeWidth="10" strokeLinecap="round" /><path d="M44 12l19 11-19 11z" /></svg>
      </Placed>

      <Placed $x={1220} $y={141}>
        <Browser>
          <BrTitle>
            <svg width="24" height="32" viewBox="0 0 24 32"><ellipse cx="11" cy="14" rx="13" ry="17.500" fill="#e0601c" /><ellipse cx="12" cy="9" rx="8" ry="12" fill="#2e77c0" /><path d="M1 0h4c1 4 6 3 7 5 1 3-4 3-3 6s6 5 8 3c5-3 3-9 1-14 6 3 8 20-4 26C4 31-3 20 1 0z" fill="#f08a24" /><path d="M2 6c3 2 2 8 6 11s8 2 11-1c-2 10-15 12-17 1z" fill="#d04a16" /></svg>
            <BrCaption>
              <Txt w={319} size={28} color="#fff" weight={600} font={`"Open Sans", sans-serif`} shadow="2px 2px 0 #4f5a2a">Cours JavaSCript - Mozilla Firefox</Txt>
            </BrCaption>
          </BrTitle>
          <BrMenu>
            <Txt w={47} size={22} font={TAHOMA}><u>F</u>ichier</Txt>
            <Txt w={49} size={22} font={TAHOMA}>Éditio<u>n</u></Txt>
            <Txt w={70} size={22} font={TAHOMA}><u>A</u>ffichage</Txt>
            <Txt w={73} size={22} font={TAHOMA}><u>H</u>istorique</Txt>
            <Txt w={70} size={22} font={TAHOMA}><u>M</u>arque-p</Txt>
          </BrMenu>
          <BrTools>
            <svg width="292" height="80" viewBox="0 0 292 80">
              <path d="M8 12h102c6 5 8 14 8 29s-2 26-6 30H8C3 64 1 54 1 41S4 17 8 12z" fill="#d4d4d3" />
              <path d="M8 12.500h102c4 3 6 8 7 14" fill="none" stroke="#a3a3a1" />
              <path d="M54 19h34c6 6 6 38 0 45H54z" fill="#c4c4c3" stroke="#a5a5a5" />
              <ellipse cx="30" cy="41.500" rx="24" ry="33.500" fill="#c2c2c1" stroke="#9c9c9c" />
              <path d="M8 28a23 33 0 0 1 44 0c2 8-46 18-44 0z" fill="#d0d0d0" />
              <path d="M35 26L24 41.500 35 57" fill="none" stroke="#fff" strokeWidth="4.500" />
              <path d="M72 30l8 11.500L72 53" fill="none" stroke="#fff" strokeWidth="4.500" />
              <path d="M101 39h10l-5 8z" fill="#777" />
              <path d="M157 52c-4 8-17 6-18-10s12-19 17-11" fill="none" stroke="#1762d6" strokeWidth="5.500" />
              <path d="M161 24v17h-14z" fill="#1762d6" />
              <path d="M193 27l21 29M214 27l-21 29" stroke="#a6a6a5" strokeWidth="6" strokeLinecap="round" />
              <path d="M248 40v19h21V40L258 27z" fill="#f5f7fb" stroke="#6a86bd" />
              <rect x="255" y="44" width="7" height="14" fill="#8a4f24" />
              <path d="M246 43l12.500-15L271 43" fill="none" stroke="#d99b1b" strokeWidth="7" />
              <path d="M246 43l12.500-15L271 43" fill="none" stroke="#ffd44a" strokeWidth="5" />
            </svg>
            <UrlBox>
              <UrlIcon><FileIcon /></UrlIcon>
              <UrlText><Txt w={77} size={22} font={TAHOMA}>file:///C:/D</Txt></UrlText>
            </UrlBox>
          </BrTools>
          <BrTabs>
            <BrTab><FileIcon /><Txt w={145} size={22} weight={700} font={TAHOMA}>Cours JavaSCript</Txt></BrTab>
            <BrNewTab><svg width="14" height="18" viewBox="0 0 14 18"><path d="M7 0v18M0 9h14" stroke="#7c7c78" strokeWidth="4" /><path d="M7 2v14M2 9h10" stroke="#c2c2bc" strokeWidth="1.200" /></svg></BrNewTab>
          </BrTabs>
        </Browser>
      </Placed>
      <Placed $x={1228} $y={393}>
        <Txt w={169} size={32} color="#111" font={`"Liberation Serif", serif`}>La somme est : 10</Txt>
      </Placed>
      <Placed $x={1570} $y={587}>
        <svg width="66" height="19" viewBox="0 0 66 19"><path d="M3 19a33 33 0 0 1 60 0z" fill="#dedede" /></svg>
      </Placed>
    </Canvas>
  );
}

const Sync = () => (
  <g><circle cx="23" cy="17" r="6.500" fill="#fff" /><path d="M19 16c1-4 7-4 8-1M27 18c-1 4-7 4-8 1" fill="none" stroke="#1c6fbd" strokeWidth="1.600" /></g>
);

function TaskbarView() {
  return (
    <Taskbar>
      <StartBtn><svg width="20" height="20" viewBox="0 0 20 20" fill="#fff"><path d="M0 3l8.500-1.300v7.800H0zM9.500 1.500L20 0v9.500H9.500zM0 10.500h8.500v7.800L0 17zM9.500 10.500H20V20L9.500 18.500z" /></svg></StartBtn>
      <SearchBox>
        <svg width="21" height="21" viewBox="0 0 21 21"><circle cx="13" cy="8" r="6.500" fill="none" stroke="#222" strokeWidth="1.500" /><path d="M8.500 13L1 20" stroke="#222" strokeWidth="1.600" /></svg>
        <Txt w={211} size={18}>Taper ici pour rechercher</Txt>
      </SearchBox>
      <TaskItem $w={60}><TaskIcon><svg width="22" height="22" viewBox="0 0 22 22"><circle cx="11" cy="11" r="8.300" fill="none" stroke="#fff" strokeWidth="2.800" /></svg></TaskIcon></TaskItem>
      <TaskItem $w={61}><TaskIcon><svg width="21" height="20" viewBox="0 0 21 20" fill="none" stroke="#fff" strokeWidth="1.300"><rect x="1" y="5" width="12" height="10" /><path d="M1 0v2.500h12V0M1 20v-2.500h12V20M18.500 0v5M18.500 11v9" /><path d="M17 8h3" strokeWidth="3" /></svg></TaskIcon></TaskItem>
      <TaskItem $w={53} $run><TaskIcon><svg width="30" height="30" viewBox="0 0 30 30"><path d="M0 0h23l7 7v23H0z" fill="#f5871f" /><path d="M24 0l6 6h-6z" fill="#f5871f" stroke="#1f211c" /><path d="M15 4l11 11-11 11L4 15z" fill="#f9a552" /><path d="M19 7c-9-2-13 13-4 12 4 0 6-3 6-6h-5" fill="none" stroke="#fff" strokeWidth="3" /><text x="15" y="28" textAnchor="middle" fontSize="7" fontWeight="700" fill="#fff" fontFamily="Noto Sans">PDF</text></svg></TaskIcon></TaskItem>
      <TaskItem $w={48} $run $multi><TaskIcon><svg width="28" height="24" viewBox="0 0 28 24"><path d="M0 0h12l2 3H0z" fill="#d99a10" /><rect y="3" width="28" height="20" rx="1" fill="#ffd158" /><path d="M5 23V14q0-2 2-2h14q2 0 2 2v9h-4v-6H9v6z" fill="#3c93de" /></svg></TaskIcon></TaskItem>
      <TaskItem $w={49} $run><TaskIcon><svg width="32" height="31" viewBox="0 0 32 31"><circle cx="15" cy="15" r="15" fill="#fcc72e" /><path d="M15 15L2 7.500A15 15 0 0 1 28 7.500z" fill="#e5382c" /><path d="M2 7.500A15 15 0 0 0 14 30l6-11-5-4z" fill="#2ba24c" /><circle cx="15" cy="15" r="7" fill="#fff" /><circle cx="15" cy="15" r="5.500" fill="#3b7de9" /><circle cx="23" cy="22" r="9" fill="#98a0a3" /><path d="M16 28c2-6 12-6 14 0-3 4-11 4-14 0z" fill="#273043" /><circle cx="23" cy="18" r="3.600" fill="#a46f4d" /></svg></TaskIcon></TaskItem>
      <TaskItem $w={49}><TaskIcon><Docker><FaDocker /></Docker></TaskIcon></TaskItem>
      <TaskItem $w={49}><TaskIcon><svg width="30" height="30" viewBox="0 0 30 30"><path d="M2 1l13 2-3 14-7 12-5-6 3-10z" fill="#fc8b33" /><path d="M15 0l15 8-6 22-14-1z" fill="#1a9df5" /><path d="M2 1l12 5L3 17z" fill="#fd2f8a" /><path d="M20 29L30 14l-4 15z" fill="#37d4f2" /><rect x="6" y="6" width="18" height="18" fill="#190b1d" /><text x="14.500" y="16" textAnchor="middle" fontSize="10" fontWeight="700" fill="#fff" fontFamily="DejaVu Sans Mono">IJ</text><path d="M8 21h7" stroke="#fff" strokeWidth="1.500" /></svg></TaskIcon></TaskItem>
      <TaskItem $w={49}><TaskIcon><svg width="30" height="30" viewBox="0 0 30 30"><rect width="30" height="30" rx="4" fill="#020b5b" /><circle cx="15" cy="15" r="12" fill="#fff" /><path d="M4 15l7-5v3.500h8V10l7 5-7 5v-3.500h-8V20z" fill="#020b5b" /></svg></TaskIcon></TaskItem>
      <TaskItem $w={49} $run><TaskIcon><svg width="30" height="30" viewBox="0 0 30 30"><defs><linearGradient id="wb" x1="0" y1="0" x2="1" y2="1"><stop offset=".3" stopColor="#1530f0" /><stop offset="1" stopColor="#3cd8d0" /></linearGradient></defs><rect y="4" width="30" height="22" rx="1" fill="url(#wb)" /><path d="M3 14c4-5 6-2 7 1s5 3 9-1" fill="none" stroke="#fff" strokeWidth="2.200" /><path d="M18 15L26 1l3 2-9 13z" fill="#222c38" /></svg></TaskIcon></TaskItem>
      <TaskItem $w={49} $run $multi><TaskIcon><svg width="28" height="28" viewBox="0 0 28 28"><rect x="14" y="4" width="14" height="20" fill="#fff" stroke="#cf4526" strokeWidth="1.500" /><path d="M17 20h9M17 17h9" stroke="#cf4526" strokeWidth="1.500" /><circle cx="21" cy="11" r="4" fill="#cf4526" /><path d="M0 3l17-3v28L0 25z" fill="#d04423" /><text x="8" y="20" textAnchor="middle" fontSize="16" fontWeight="700" fill="#fff" fontFamily="Noto Sans">P</text></svg></TaskIcon></TaskItem>
      <TaskItem $w={48} $run><TaskIcon><svg width="30" height="30" viewBox="0 0 30 30"><path d="M22 0l8 3v24l-8 3L1 11l3-3 18 14z" fill="#1f8ad2" /><path d="M22 0v8L4 22l-3-3z" fill="#0a67ac" /><path d="M22 0l8 3v24l-8 3z" fill="#2aa4ee" /></svg></TaskIcon></TaskItem>
      <TaskItem $w={47} $run><TaskIcon><svg width="28" height="28" viewBox="0 0 28 28"><path d="M9 1l17 2-7 22L0 21z" fill="#83bfc9" /><path d="M9 1l17 2-3 9L5 10z" fill="#c6e4ea" /><path d="M19 25l7-22 2 20-7 4z" fill="#e9edf0" /><path d="M10 2l15 2" stroke="#4c5a62" strokeWidth="2" /></svg></TaskIcon></TaskItem>
      <TaskItem $w={48} $run $on><TaskIcon><svg width="31" height="31" viewBox="0 0 31 31"><path d="M15 6C6 6 0 12 1 20c1 7 8 8 9 5 0-3 3-4 5-2 2 4 11 4 12-4 1-8-4-13-12-13z" fill="#bcdff3" stroke="#7aa9c8" /><circle cx="6" cy="15" r="2.600" fill="#e33b3b" /><circle cx="11" cy="10.500" r="2.500" fill="#3fae49" /><circle cx="18" cy="11" r="2.400" fill="#f0b429" /><circle cx="23" cy="16" r="2.500" fill="#2f6fd0" /><path d="M18 30L25 8" stroke="#c7792b" strokeWidth="2.500" /><path d="M23 8c0-5 3-7 7-8 1 5-1 9-4 10z" fill="#c9a06b" /></svg></TaskIcon></TaskItem>
      <TaskItem $w={48} $run><TaskIcon><svg width="30" height="30" viewBox="0 0 30 30"><rect width="30" height="30" rx="11" fill="#0b5cff" /><text x="15" y="18" textAnchor="middle" fontSize="8.500" fontWeight="700" fill="#fff" fontFamily="Noto Sans">zoom</text></svg></TaskIcon></TaskItem>
      <TaskItem $w={62}><TaskIcon><svg width="29" height="29" viewBox="0 0 29 29"><circle cx="13" cy="15" r="12" fill="#0f8fc8" stroke="#fff" strokeWidth="2" /><text x="13" y="22" textAnchor="middle" fontSize="20" fontWeight="700" fill="#fff" fontFamily="Noto Sans">?</text><circle cx="23" cy="21" r="6" fill="#f0a81c" /><text x="23" y="25" textAnchor="middle" fontSize="10" fontWeight="700" fill="#fff" fontFamily="Noto Sans">i</text></svg></TaskIcon></TaskItem>
      <Tray>
        <TrayItem $w={58}><svg width="32" height="29" viewBox="0 0 32 29"><defs><linearGradient id="su" x1="0" y1="0" x2="1" y2="1"><stop offset="0" stopColor="#fcb524" /><stop offset="1" stopColor="#ef6c10" /></linearGradient></defs><circle cx="16" cy="15" r="13" fill="url(#su)" /><path d="M2 12c-3-3 0-6 2-5 0-6 8-7 9-2 4-1 5 6 2 7z" fill="#b7cffa" stroke="#86a9e8" strokeWidth=".7" /><path d="M15 27c-4-2-2-7 2-6 0-6 8-7 9-1 5-2 7 5 3 7z" fill="#b7cffa" stroke="#86a9e8" strokeWidth=".7" /></svg></TrayItem>
        <TrayItem $w={70} $start><Txt w={37} size={16}>16°C</Txt></TrayItem>
        <TrayItem $w={20}><svg width="16" height="10" viewBox="0 0 16 10"><path d="M1 9l7-7.500L15 9" fill="none" stroke="#fff" strokeWidth="1.500" /></svg></TrayItem>
        <TrayItem $w={60}><svg width="21" height="18" viewBox="0 0 21 18" fill="none" stroke="#fff" strokeWidth="1.200"><path d="M1 6h3l5-4v14l-5-4H1z" /><path d="M12 6c1 2 1 4 0 6M14.500 4c2 3 2 7 0 10M17 2c4 4 4 10 0 14" /></svg></TrayItem>
        <TrayItem $w={21}><svg width="17" height="17" viewBox="0 0 17 17" fill="none" stroke="#fff" strokeWidth="1.200"><path d="M1 16C1 7 7 1 16 1M4.500 16C5 9 9 5 16 4.500M8 16c0-5 3-8 8-8M11.500 16c0-3 2-4.500 4.500-4.500" /><circle cx="15" cy="15" r="1.500" fill="#fff" stroke="none" /></svg></TrayItem>
        <TrayItem $w={58}><svg width="22" height="18" viewBox="0 0 30 25"><path d="M4 19c-6-3-4-11 2-10 2-9 14-9 15 0 5 0 8 3 7 7l-8 4z" fill="#0a6cc4" /><path d="M3 19c0-5 6-8 11-6l8 8H5z" fill="#29a4e8" /><Sync /></svg></TrayItem>
        <TrayItem $w={24}><svg width="22" height="18" viewBox="0 0 30 25"><path d="M4 19c-6-3-4-11 2-10 2-9 14-9 15 0 5 0 8 3 7 7l-8 4z" fill="#b1b1b1" /><path d="M3 19c0-5 6-8 11-6l8 8H5z" fill="#eee" /><Sync /></svg></TrayItem>
        <TrayItem $w={56}><svg width="15" height="20" viewBox="0 0 15 20" fill="none" stroke="#fff" strokeWidth="1.300"><rect x="1" y="5" width="9" height="9" rx="1.500" /><path d="M10 9l4-2.500v7L10 11M3 2.500C5 .5 9 .5 12 2.500M3 17.500c2 2 6 2 9 0" /></svg></TrayItem>
        <TrayItem $w={23}><svg width="14" height="21" viewBox="0 0 14 21"><rect x="3" y="0" width="8" height="14" rx="2" fill="#fff" /><path d="M1 9v4c0 5 12 5 12 0V9M7 17v3M3 20h8" fill="none" stroke="#fff" strokeWidth="1.300" /></svg></TrayItem>
        <TrayItem $w={56}><svg width="21" height="21" viewBox="0 0 21 21"><path d="M1 4l18-3v15M1 4v13l9 2" fill="none" stroke="#fff" strokeWidth="1.300" /><path d="M6 14V9c0-3 5-3 6 0M5 8h4M13 7v4c0 3-4 4-6 1" fill="none" stroke="#fff" strokeWidth="1.300" /><circle cx="16" cy="16.500" r="4.500" fill="#2f78c4" /></svg></TrayItem>
        <TrayItem $w={24}><svg width="21" height="15" viewBox="0 0 21 15"><rect x="4" y="4" width="15" height="10" fill="none" stroke="#fff" /><rect x="6" y="6" width="11" height="6" fill="#fff" /><path d="M20 7v4M1 1v4h5V1M3.500 5v5" stroke="#fff" strokeWidth="1.300" fill="none" /></svg></TrayItem>
        <TrayItem $w={67}><svg width="20" height="21" viewBox="0 0 20 21" fill="none" stroke="#fff" strokeWidth="1.300"><path d="M7 15L11 3c1-3 4-2 3 1L9 16c-1 3-4 5-7 4-2-3 1-7 5-8 4-2 8-4 11-3 2 2-2 5-5 3" /></svg></TrayItem>
        <TrayItem $w={27}><Txt w={26} size={15}>FRA</Txt></TrayItem>
        <Clock $w={111}><Txt w={35} size={14}>12:29</Txt><Txt w={76} size={14}>14/02/2024</Txt></Clock>
        <TrayItem $w={28}><svg width="20" height="21" viewBox="0 0 20 21"><path d="M1 1h18v15h-6l-3 3.500L7 16H1z" fill="none" stroke="#fff" strokeWidth="1.400" /></svg></TrayItem>
      </Tray>
    </Taskbar>
  );
}

const hLabels = Array.from({ length: 19 }, (_, i) => 1800 + i * 100);
const vLabels = ["0", "100", "200", "300", "400", "500", "600", "700"];

export default function App() {
  return (
    <Screen>
      <Global />
      <PaintWindow>
        <TitleBar>
          <QuickAccess>
            <svg width="35" height="18" viewBox="0 0 35 18"><circle cx="3" cy="9" r="8" fill="#9dcbe6" stroke="#6f9fbe" /><circle cx="2" cy="6" r="2" fill="#4cae4f" /><circle cx="7" cy="5" r="1.500" fill="#e7b02d" /><path d="M5 16L11 2" stroke="#d9852f" strokeWidth="3" /><path d="M20.500 1v16" stroke="#a0a0a0" /></svg>
            <svg width="26" height="18" viewBox="0 0 26 18"><path d="M0 1h16v16H0z" fill="#8862b8" /><path d="M3 1h10v8H3z" fill="#f5f7fa" /><path d="M4 3h8M4 5h8M4 7h8" stroke="#b9c4d6" /><path d="M4 12h8v5H4z" fill="#3c2f57" /><path d="M6 13h2v3H6z" fill="#fff" /></svg>
            <Swoosh color="#2d9be2" />
            <svg width="9" height="1" />
            <Swoosh flip color="#afc0d8" />
            <svg width="44" height="18" viewBox="0 0 44 18"><path d="M9.500 8.500h7" stroke="#222" /><path d="M9.500 11h7L13 14.500z" fill="#222" /><path d="M29.500 1v16" stroke="#a0a0a0" /></svg>
          </QuickAccess>
          <TitleWrap><Txt w={125} size={14}>Day3_js.png - Paint</Txt></TitleWrap>
          <WindowButtons>
            <svg width="12" height="12" viewBox="0 0 12 12"><path d="M0 5.500h12" stroke="#000" /></svg>
            <svg width="13" height="12" viewBox="0 0 13 12" fill="none" stroke="#000"><path d="M.5 2.500h9v9h-9zM2.500 2V.5h9v9H10" /></svg>
            <svg width="12" height="12" viewBox="0 0 12 12"><path d="M0 0l12 12M12 0L0 12" stroke="#000" strokeWidth="1.100" /></svg>
          </WindowButtons>
        </TitleBar>
        <TabRow>
          <FileTab><Txt w={37} color="#fff">Fichier</Txt></FileTab>
          <HomeTab><Txt w={40}>Accueil</Txt></HomeTab>
          <PlainTab><Txt w={54}>Affichage</Txt></PlainTab>
          <TabTools>
            <svg width="12" height="7" viewBox="0 0 12 7"><path d="M.5 6.500L6 1l5.500 5.500" fill="none" stroke="#999" strokeWidth="1.300" /></svg>
            <svg width="20" height="20" viewBox="0 0 20 20"><circle cx="10" cy="10" r="9.500" fill="#0a69c7" stroke="#0b4f94" /><text x="10" y="15.500" textAnchor="middle" fontSize="15" fontWeight="700" fill="#fff" fontFamily="Noto Sans">?</text></svg>
          </TabTools>
        </TabRow>
        <RibbonBar />
        <Ruler>
          <HCell $w={40} />
          {hLabels.map((n) => <HCell key={n} $w={100} $major><Txt w={24} size={12}>{n}</Txt></HCell>)}
          <HMark />
        </Ruler>
        <Work>
          <VRuler>
            {vLabels.map((n) => <VCell key={n}><VLabel>{n}</VLabel></VCell>)}
            <VCell />
            <VMark />
          </VRuler>
          <Center>
            <Gutter />
            <CanvasContent />
            <HScroll>
              <svg width="7" height="11" viewBox="0 0 7 11"><path d="M6 1L1.500 5.500 6 10" fill="none" stroke="#505050" strokeWidth="2" /></svg>
              <HThumb />
              <svg width="7" height="11" viewBox="0 0 7 11"><path d="M1 1l4.500 4.500L1 10" fill="none" stroke="#505050" strokeWidth="2" /></svg>
            </HScroll>
          </Center>
          <VScroll>
            <svg width="11" height="7" viewBox="0 0 11 7"><path d="M1 6l4.500-4.500L10 6" fill="none" stroke="#505050" strokeWidth="2" /></svg>
            <VThumb />
            <svg width="11" height="7" viewBox="0 0 11 7"><path d="M1 1l4.500 4.500L10 1" fill="none" stroke="#505050" strokeWidth="2" /></svg>
          </VScroll>
        </Work>
        <Status>
          <StatusCell $w={194} $pl={0}>
            <svg width="14" height="17" viewBox="0 0 14 17"><path d="M6.500 1v15M0 8.500h13M4.500 3l2-2 2 2M4.500 14l2 2 2-2M11 6.500l2 2-2 2" fill="none" stroke="#1e395b" strokeWidth="1.200" /></svg>
          </StatusCell>
          <StatusCell $w={200}><SizeIcon dashed /></StatusCell>
          <StatusCell $w={200}><SizeIcon /><StatusText><Txt w={98} size={14}>5972 × 3104px</Txt></StatusText></StatusCell>
          <StatusCell $w={200} $pl={6}>
            <svg width="18" height="17" viewBox="0 0 18 17"><path d="M.5.500h16v16H3l-2.500-2z" fill="#d5e2ee" stroke="#41648c" /><path d="M3 .5h11v8H3z" fill="#fff" stroke="#6d8bab" /><path d="M5 11.500h8v5H5z" fill="#fff" stroke="#41648c" /><path d="M7 13h2v3H7z" fill="#41648c" /></svg>
            <StatusText><Txt w={95} size={14}>Taille : 26,8 Ko</Txt></StatusText>
          </StatusCell>
          <StatusCell $w={876} />
          <ZoomArea>
            <StatusText><Txt w={40} size={14}>100 %</Txt></StatusText>
            <svg width="7" height="1" />
            <RoundBtn><svg width="10" height="10" viewBox="0 0 10 10"><path d="M0 5h10" stroke="#555" strokeWidth="1.500" /></svg></RoundBtn>
            <Track><svg width="13" height="23" viewBox="0 0 13 23"><path d="M0 0h13v17l-6.500 6L0 17z" fill="#0078d7" /></svg></Track>
            <RoundBtn><svg width="10" height="10" viewBox="0 0 10 10"><path d="M0 5h10M5 0v10" stroke="#444" strokeWidth="1.800" /></svg></RoundBtn>
          </ZoomArea>
        </Status>
      </PaintWindow>
      <TaskbarView />

      <ShareBar>
        <ShareInfo>
          <svg width="13" height="14" viewBox="0 0 13 14"><path d="M13 0.500C8 0 3 1 3 7L0 7.500 1 11l4 3 4-2 1-4-2-.5c0-3 2-5 5-7z" fill="#0b5a12" /></svg>
          <ShareText><Txt w={294} size={14} weight={700} color="#232333">Vous êtes en train de partager votre écran</Txt></ShareText>
          <svg width="13" height="14" viewBox="0 0 13 14"><path d="M6.500 0L13 2v5c0 4-3 6-6.500 7C3 13 0 11 0 7V2z" fill="#165418" /><path d="M3.500 7l2.200 2.200L9.500 5" fill="none" stroke="#23d959" strokeWidth="1.500" /></svg>
        </ShareInfo>
        <ShareStop>
          <StopIcon />
          <Txt w={122} size={13.500} weight={700} color="#fff">Arrêter le partage</Txt>
        </ShareStop>
      </ShareBar>
      <TopLine />
      <Toast><Txt w={235} size={16} color="#f2f4f5">La parole est à : Amine Mezghi...</Txt></Toast>
    </Screen>
  );
}
